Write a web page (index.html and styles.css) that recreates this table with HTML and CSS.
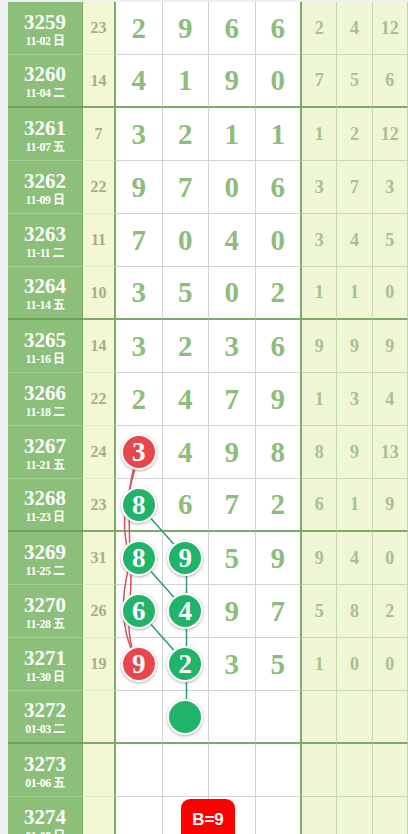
FILE: index.html
```html
<!DOCTYPE html>
<html lang="zh">
<head>
    <meta charset="UTF-8">
    <meta name="viewport" content="width=device-width, initial-scale=1.0">
    <title>走势图</title>
    <link rel="stylesheet" href="styles.css">
</head>
<body>
    <div class="page">
        <div class="sheet">
            <div class="row">
                <div class="issue"><b>3259</b><span>11-02 日</span></div>
                <div class="sum">23</div>
                <div class="d">2</div><div class="d">9</div><div class="d">6</div><div class="d last">6</div>
                <div class="s">2</div><div class="s">4</div><div class="s">12</div>
            </div>
            <div class="row end">
                <div class="issue"><b>3260</b><span>11-04 二</span></div>
                <div class="sum">14</div>
                <div class="d">4</div><div class="d">1</div><div class="d">9</div><div class="d last">0</div>
                <div class="s">7</div><div class="s">5</div><div class="s">6</div>
            </div>
            <div class="row">
                <div class="issue"><b>3261</b><span>11-07 五</span></div>
                <div class="sum">7</div>
                <div class="d">3</div><div class="d">2</div><div class="d">1</div><div class="d last">1</div>
                <div class="s">1</div><div class="s">2</div><div class="s">12</div>
            </div>
            <div class="row">
                <div class="issue"><b>3262</b><span>11-09 日</span></div>
                <div class="sum">22</div>
                <div class="d">9</div><div class="d">7</div><div class="d">0</div><div class="d last">6</div>
                <div class="s">3</div><div class="s">7</div><div class="s">3</div>
            </div>
            <div class="row">
                <div class="issue"><b>3263</b><span>11-11 二</span></div>
                <div class="sum">11</div>
                <div class="d">7</div><div class="d">0</div><div class="d">4</div><div class="d last">0</div>
                <div class="s">3</div><div class="s">4</div><div class="s">5</div>
            </div>
            <div class="row end">
                <div class="issue"><b>3264</b><span>11-14 五</span></div>
                <div class="sum">10</div>
                <div class="d">3</div><div class="d">5</div><div class="d">0</div><div class="d last">2</div>
                <div class="s">1</div><div class="s">1</div><div class="s">0</div>
            </div>
            <div class="row">
                <div class="issue"><b>3265</b><span>11-16 日</span></div>
                <div class="sum">14</div>
                <div class="d">3</div><div class="d">2</div><div class="d">3</div><div class="d last">6</div>
                <div class="s">9</div><div class="s">9</div><div class="s">9</div>
            </div>
            <div class="row">
                <div class="issue"><b>3266</b><span>11-18 二</span></div>
                <div class="sum">22</div>
                <div class="d">2</div><div class="d">4</div><div class="d">7</div><div class="d last">9</div>
                <div class="s">1</div><div class="s">3</div><div class="s">4</div>
            </div>
            <div class="row">
                <div class="issue"><b>3267</b><span>11-21 五</span></div>
                <div class="sum">24</div>
                <div class="d"><i class="ball red">3</i></div><div class="d">4</div><div class="d">9</div><div class="d last">8</div>
                <div class="s">8</div><div class="s">9</div><div class="s">13</div>
            </div>
            <div class="row end">
                <div class="issue"><b>3268</b><span>11-23 日</span></div>
                <div class="sum">23</div>
                <div class="d"><i class="ball">8</i></div><div class="d">6</div><div class="d">7</div><div class="d last">2</div>
                <div class="s">6</div><div class="s">1</div><div class="s">9</div>
            </div>
            <div class="row">
                <div class="issue"><b>3269</b><span>11-25 二</span></div>
                <div class="sum">31</div>
                <div class="d"><i class="ball">8</i></div><div class="d"><i class="ball">9</i></div><div class="d">5</div><div class="d last">9</div>
                <div class="s">9</div><div class="s">4</div><div class="s">0</div>
            </div>
            <div class="row">
                <div class="issue"><b>3270</b><span>11-28 五</span></div>
                <div class="sum">26</div>
                <div class="d"><i class="ball">6</i></div><div class="d"><i class="ball">4</i></div><div class="d">9</div><div class="d last">7</div>
                <div class="s">5</div><div class="s">8</div><div class="s">2</div>
            </div>
            <div class="row">
                <div class="issue"><b>3271</b><span>11-30 日</span></div>
                <div class="sum">19</div>
                <div class="d"><i class="ball red">9</i></div><div class="d"><i class="ball">2</i></div><div class="d">3</div><div class="d last">5</div>
                <div class="s">1</div><div class="s">0</div><div class="s">0</div>
            </div>
            <div class="row end">
                <div class="issue"><b>3272</b><span>01-03 二</span></div>
                <div class="sum"></div>
                <div class="d"></div><div class="d"><i class="ball"></i></div><div class="d"></div><div class="d last"></div>
                <div class="s"></div><div class="s"></div><div class="s"></div>
            </div>
            <div class="row">
                <div class="issue"><b>3273</b><span>01-06 五</span></div>
                <div class="sum"></div>
                <div class="d"></div><div class="d"></div><div class="d"></div><div class="d last"></div>
                <div class="s"></div><div class="s"></div><div class="s"></div>
            </div>
            <div class="row">
                <div class="issue"><b>3274</b><span>01-08 日</span></div>
                <div class="sum"></div>
                <div class="d"></div><div class="d"></div><div class="d"></div><div class="d last"></div>
                <div class="s"></div><div class="s"></div><div class="s"></div>
            </div>

            <!-- trend lines under the balls -->
            <svg class="lines" width="400" height="848" viewBox="0 0 400 848">
                <g fill="none" stroke="#d6505a" stroke-width="1.5">
                    <path d="M131,451 C112,495 128,535 118,578 C110,620 122,648 131,662"/>
                    <path d="M131,451 C124,482 110,512 120,548 C130,588 110,628 131,662"/>
                </g>
                <g stroke="#2f9a72" stroke-width="1.5">
                    <line x1="131.5" y1="503.5" x2="178.5" y2="556.5"/>
                    <line x1="131.5" y1="556.5" x2="178.5" y2="609.5"/>
                    <line x1="131.5" y1="609.5" x2="178.5" y2="662.5"/>
                    <line x1="178.5" y1="556.5" x2="178.5" y2="715.5"/>
                </g>
            </svg>

            <div class="badge">B=9</div>
        </div>
    </div>
</body>
</html>
```

FILE: styles.css
```css
body {
    margin: 0;
    background-color: #eef0f6;
    font-family: 'Liberation Serif', 'Noto Sans CJK SC', serif;
    overflow: hidden;
}
.page {
    padding: 2px 0 0 8px;
}
.sheet {
    position: relative;
    width: 400px;
}
.row {
    display: grid;
    grid-template-columns: 75px 33px repeat(4, 46.5px) repeat(3, 1fr);
    height: 53px;
}
.row > div {
    box-sizing: border-box;
    display: flex;
    align-items: center;
    justify-content: center;
    border-bottom: 1px solid #d3d3d3;
    font-weight: bold;
}
.issue {
    flex-direction: column;
    background-color: #8cc07a;
    color: #ffffff;
    border-right: 1px solid #77a866;
    padding-top: 5px;
}
.row > .issue {
    border-bottom-color: #a2cf92;
}
.issue b {
    font-size: 21px;
    line-height: 20px;
}
.issue span {
    font-size: 12px;
    line-height: 18px;
    letter-spacing: -0.5px;
}
.sum {
    background-color: #f4f7d3;
    color: #a9ad87;
    font-size: 16px;
    border-right: 2px solid #7fa968;
}
.row > .sum {
    border-bottom-color: #e6ebc4;
}
.d {
    background-color: #ffffff;
    color: #8dbd7c;
    font-size: 29px;
    border-right: 1px solid #d3d3d3;
}
.d.last {
    border-right: 2px solid #7fa968;
}
.s {
    background-color: #eef6d6;
    color: #a8c08f;
    font-size: 18px;
    border-right: 1px solid #c6dbab;
}
.row > .s {
    border-bottom-color: #c6dbab;
}
.row.end > div {
    border-bottom: 2px solid #7fa968;
}
.row.end > .issue {
    border-bottom-color: #6e9d5c;
}
.ball {
    position: relative;
    z-index: 2;
    width: 32px;
    height: 32px;
    border-radius: 50%;
    border: 2px solid #ffffff;
    background-color: #1fb46a;
    box-shadow: 0 1px 3px rgba(120, 60, 80, 0.45);
    color: #ffffff;
    font-style: normal;
    font-size: 27px;
    line-height: 33px;
    text-align: center;
}
.ball.red {
    background-color: #e8464d;
}
.lines {
    position: absolute;
    left: 0;
    top: 0;
    z-index: 1;
    pointer-events: none;
}
.badge {
    position: absolute;
    left: 173px;
    top: 797px;
    z-index: 3;
    width: 54px;
    height: 44px;
    border-radius: 9px;
    background-color: #ff0000;
    color: #ffffff;
    font-family: 'Liberation Sans', sans-serif;
    font-weight: bold;
    font-size: 17px;
    line-height: 42px;
    text-align: center;
}
```
